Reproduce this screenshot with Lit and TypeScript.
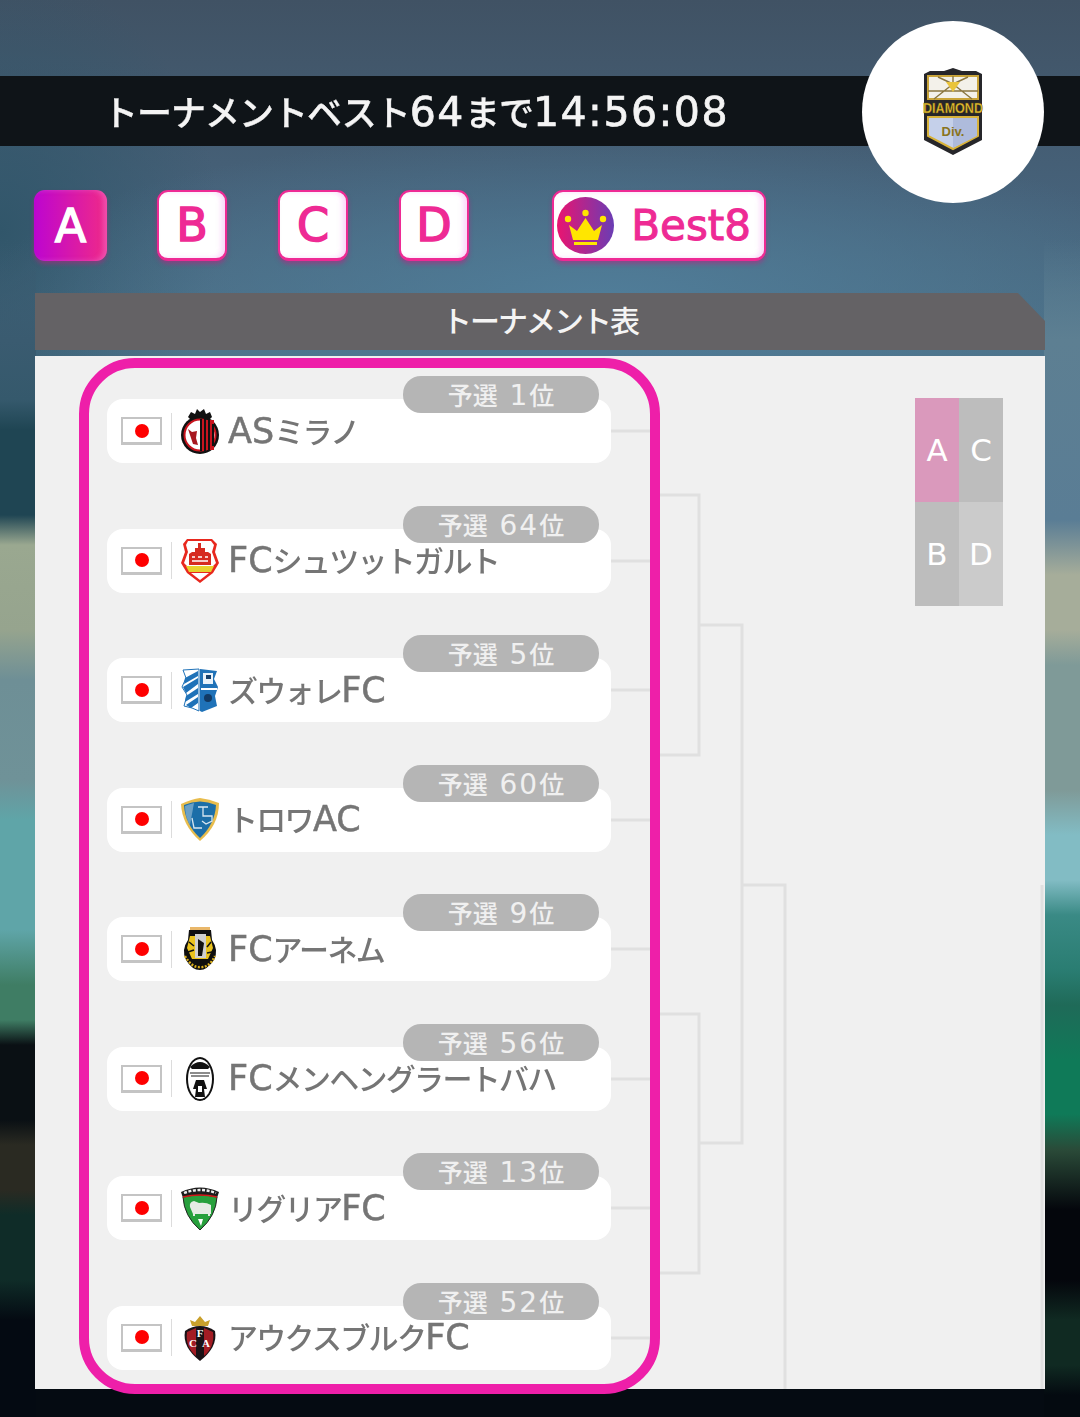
import { LitElement, css, html, svg } from 'lit';
import { customElement } from 'lit/decorators.js';

const teams = [
  { rank: '予選 1位', name: 'ASミラノ', crest: 'milan' },
  { rank: '予選 64位', name: 'FCシュツットガルト', crest: 'stuttgart' },
  { rank: '予選 5位', name: 'ズウォレFC', crest: 'zwolle' },
  { rank: '予選 60位', name: 'トロワAC', crest: 'troyes' },
  { rank: '予選 9位', name: 'FCアーネム', crest: 'arnhem' },
  { rank: '予選 56位', name: 'FCメンヘングラートバハ', crest: 'mgladbach' },
  { rank: '予選 13位', name: 'リグリアFC', crest: 'liguria' },
  { rank: '予選 52位', name: 'アウクスブルクFC', crest: 'augsburg' },
];

// latin and digits are set wider than the kana in the game's font
const mixed = (text: string) =>
  text.split(/([A-Za-z0-9:]+)/).map((part, i) => (i % 2 ? html`<span class="lat">${part}</span>` : part));

const crests: Record<string, unknown> = {
  milan: svg`
    <path d="M8 9 L11 4 L15 6 L17 1 L20 4 L24 1 L26 6 L30 4 L32 9 L28 13 H12 Z" fill="#111"/>
    <circle cx="20" cy="27" r="19" fill="#111"/>
    <circle cx="20" cy="27" r="15.5" fill="#fff" stroke="#c8141e" stroke-width="2"/>
    <path d="M20 12 H34 V42 H20 Z" fill="#c8141e"/>
    <path d="M21 11 V43 M25 11 V43 M29 12 V42 M33 16 V38" stroke="#111" stroke-width="2"/>
    <path d="M8 21 L12 24 L17 23 L16 30 L18 37 L13 36 L11 30 Z" fill="#a81820"/>`,
  stuttgart: svg`
    <path d="M7 1 H32 L37 6 L35 14 L39 25 L33 35 L20 45 L7 35 L1 25 L5 14 L3 6 Z" fill="#e8281e"/>
    <path d="M8 3 H31 L34 7 L32 14 L36 25 L33 28 H7 L4 25 L8 14 L6 7 Z" fill="#fff"/>
    <path d="M9 16 L12 14 H15 V10 H25 V14 H28 L31 16 V27 H9 Z" fill="#d62a20"/>
    <path d="M12 19 H15 M18 19 H22 M25 19 H28 M12 23 H28" stroke="#fff" stroke-width="1.4"/>
    <path d="M18 5 H21 V10 H18 Z" fill="#d62a20"/>
    <path d="M6 28 H34 L31 34 H9 Z" fill="#e8d22c"/>
    <path d="M11 35 H29 L20 42 Z" fill="#fff"/>`,
  zwolle: svg`
    <path d="M3 3 L19 2 V44 L12 41 L4 39 L7 28 L2 20 L6 11 Z" fill="#fff" stroke="#1f72b8" stroke-width="1"/>
    <path d="M5 11 L18 4 V9 L4 17 Z M3 20 L18 11 V17 L6 26 Z M6 29 L18 21 V27 L5 35 Z M6 38 L18 30 V36 L11 41 Z" fill="#1f72b8"/>
    <path d="M20 2 L37 4 L34 12 L38 20 L35 29 L37 39 L22 45 L20 44 Z" fill="#1f72b8"/>
    <path d="M23 6 H33 V17 H23 Z" fill="#e8f2fa"/>
    <path d="M26 8 H31 V12 H26 Z" fill="#16406c"/>
    <path d="M21 21 H37 V23 H21 Z" fill="#fff"/>
    <circle cx="28" cy="31" r="4" fill="#123a64"/>`,
  troyes: svg`
    <path d="M1 7 Q12 2 20 1 Q29 2 39 6 Q39 28 20 44 Q2 28 1 7 Z" fill="#e8bc4c"/>
    <path d="M4 8 Q20 1 36 8 Q35 27 20 41 Q5 27 4 8 Z" fill="#1b6ea8"/>
    <path d="M5 9 Q10 7 14 6 L10 28 Q5 20 5 9 Z" fill="#fff" opacity=".35"/>
    <path d="M18 10 H28 M23 10 V19 H32 V24 L26 27 L22 24 M12 21 L14 31 H22" fill="none" stroke="#d7e6f0" stroke-width="1.3"/>`,
  arnhem: svg`
    <rect x="10" y="1" width="20" height="3" fill="#e9b76a"/>
    <path d="M9 4 H31 L32 14 Q39 24 34 34 Q27 44 20 44 Q12 44 6 34 Q1 24 8 14 Z" fill="#0f0f0f"/>
    <path d="M10 10 H30 L33 22 L28 33 H12 L7 22 Z" fill="#e9c21e"/>
    <path d="M15 8 H26 V32 H15 Z" fill="#cfcfcf"/>
    <path d="M18 13 L24 17 L22 30 H18 Z" fill="#111"/>
    <path d="M9 16 L14 20 M31 16 L27 21 M8 26 L14 24 M32 26 L27 27" stroke="#111" stroke-width="1.6"/>
    <path d="M5 30 Q12 42 20 41 Q29 42 35 30" fill="none" stroke="#d9ae1c" stroke-width="2.4" stroke-dasharray="2 1.5"/>`,
  mgladbach: svg`
    <ellipse cx="20" cy="23" rx="14" ry="22" fill="#111"/>
    <ellipse cx="20" cy="23" rx="12" ry="20" fill="#fff"/>
    <path d="M10 11 Q20 1 30 11 L28 13 H12 Z" fill="#111"/>
    <path d="M10 17 H30 M11 20 H29" stroke="#666" stroke-width="1.4"/>
    <path d="M16 24 H24 L27 33 H24 L25 41 H15 L16 33 H13 Z" fill="#111"/>
    <path d="M18 30 H22 V36 H18 Z" fill="#fff"/>`,
  liguria: svg`
    <path d="M1 7 Q20 -2 39 7 L37 13 H3 Z" fill="#1c1c1c"/>
    <path d="M4 8 Q20 2 36 8" fill="none" stroke="#eee" stroke-width="2.4" stroke-dasharray="3 1.6"/>
    <path d="M3 12 Q20 8 37 12 Q36 31 20 45 Q4 31 3 12 Z" fill="#27a03c" stroke="#222" stroke-width="1"/>
    <path d="M3 12 Q20 8 37 12" fill="none" stroke="#d41818" stroke-width="1.5"/>
    <path d="M10 22 Q9 17 14 16 L19 18 Q26 17 31 20 L31 29 H13 Z" fill="#e6ebe4"/>
    <path d="M14 29 V31 M29 29 V31" stroke="#e6ebe4" stroke-width="2"/>
    <path d="M18 34 H23 L21 41 Z" fill="#fff"/>`,
  augsburg: svg`
    <path d="M12 11 L10 5 L15 7 L20 1 L25 7 L30 5 L28 11 Z" fill="#c9a02c"/>
    <path d="M5 16 Q12 11 20 11 Q28 11 35 16 Q38 32 20 46 Q2 32 5 16 Z" fill="#1a1216"/>
    <path d="M7 17 L16 13 V41 Q5 32 7 17 Z M33 17 L24 13 V41 Q35 32 33 17 Z" fill="#a21c24"/>
    <text x="20" y="22" text-anchor="middle" font-family="Liberation Serif" font-weight="700" font-size="11" fill="#fff">F</text>
    <text x="13" y="32" text-anchor="middle" font-family="Liberation Serif" font-weight="700" font-size="11" fill="#fff">C</text>
    <text x="26" y="32" text-anchor="middle" font-family="Liberation Serif" font-weight="700" font-size="11" fill="#fff">A</text>`,
};

@customElement('app-root')
export class AppRoot extends LitElement {
  static styles = css`
    :host {
      display: block;
      position: relative;
      width: 1080px;
      height: 1417px;
      overflow: hidden;
      font-family: 'Noto Sans CJK JP', 'Liberation Sans', sans-serif;
      background:
        linear-gradient(180deg, transparent 240px, #3a5b70 340px, #35596c 400px, #1f4553 430px, #1f4553 515px,
          #9aa890 545px, #96a48e 630px, #6e8f96 680px, #6f9298 780px, #5fa5a8 820px, #5fa5a8 930px,
          #3f7d64 985px, #3f7d64 1020px, #0a1014 1045px, #0a1014 1120px, #2a2a22 1145px, #2a2a22 1190px,
          #0f2c28 1215px, #0f2c28 1280px, #040a12 1320px) left top / 36px 100% no-repeat,
        linear-gradient(180deg, transparent 240px, #5d7f92 340px, #5a7d95 520px, #a6ad9a 575px, #a6ad9a 630px,
          #7f9a98 665px, #7f9a98 790px, #82bcc4 835px, #82bcc4 880px, #3a8a85 915px, #2a7d72 970px,
          #1f6a58 1005px, #0f7a58 1060px, #0f7a58 1114px, #2a4a38 1150px, #04060c 1210px, #04060c 1280px,
          #102a22 1320px, #102a22 1365px, #040a10 1395px) right top / 36px 100% no-repeat,
        radial-gradient(ellipse 620px 170px at 600px 300px, #507d99, transparent),
        radial-gradient(ellipse 220px 260px at 0 230px, #31566a, transparent),
        linear-gradient(180deg, #405264 0, #46627a 200px, #4c7086 350px, #4c7086 1300px, #050b12 1300px);
    }

    .bar {
      margin-top: 76px;
      height: 70px;
      padding-left: 103px;
      background: #0f1418;
      color: #f4f4f4;
      font-size: 35px;
      font-weight: 500;
      line-height: 70px;
      letter-spacing: -1px;
      white-space: nowrap;
      -webkit-text-stroke: 0.3px #f4f4f4;
    }

    .bar span {
      filter: blur(0.5px);
      display: inline-block;
    }

    .bar .lat {
      font-family: 'DejaVu Sans', sans-serif;
      font-size: 41px;
      font-weight: 400;
      letter-spacing: 1.5px;
      -webkit-text-stroke: 0.7px #f4f4f4;
    }

    .emblem {
      position: absolute;
      left: 862px;
      top: 21px;
      width: 182px;
      height: 182px;
      display: flex;
      align-items: center;
      justify-content: center;
      border-radius: 50%;
      background: #fff;
    }

    .tabs {
      display: flex;
      align-items: flex-start;
      margin: 44px 0 0 34px;
    }

    .tab {
      box-sizing: border-box;
      width: 70px;
      height: 71px;
      margin-right: 51px;
      display: flex;
      align-items: center;
      justify-content: center;
      border: 2px solid #ee2a94;
      border-bottom-width: 3px;
      border-radius: 11px;
      background: #fff;
      color: #ee2a94;
      font-family: 'DejaVu Sans', sans-serif;
      font-size: 46px;
      -webkit-text-stroke: 1.5px currentColor;
      box-shadow: 0 3px 4px rgba(190, 30, 130, 0.5), inset -4px 0 5px rgba(240, 150, 240, 0.35);
    }

    .tab.on {
      width: 73px;
      margin-right: 50px;
      border: 0;
      background: linear-gradient(90deg, #bd05d0, #f02a88);
      color: #fff;
    }

    .tab.best {
      width: 214px;
      margin: 0 0 0 32px;
      padding: 0 13px 0 3px;
      justify-content: space-between;
      font-size: 42px;
      -webkit-text-stroke: 1px currentColor;
    }

    .title {
      margin: 32px 35px 0;
      height: 57px;
      background: #646265;
      color: #f4f4f4;
      font-size: 30px;
      font-weight: 500;
      letter-spacing: -2px;
      line-height: 53px;
      text-align: center;
      clip-path: polygon(0 0, 983px 0, 100% 28px, 100% 100%, 0 100%);
    }

    .panel {
      position: relative;
      box-sizing: border-box;
      height: 1033px;
      margin: 6px 35px 0;
      padding: 43px 0 0 72px;
      background: #f0f0f0;
    }

    .lines {
      position: absolute;
      left: 0;
      top: 0;
    }

    .list {
      position: relative;
      display: flex;
      flex-direction: column;
      gap: 65.57px;
      width: 504px;
    }

    .row {
      position: relative;
      height: 64px;
      display: flex;
      align-items: center;
      border-radius: 16px;
      background: #fff;
    }

    .rank {
      position: absolute;
      right: 12px;
      top: -23px;
      width: 196px;
      height: 37px;
      border-radius: 18px;
      background: #b5b5b5;
      color: #f0f0f0;
      font-size: 25px;
      font-weight: 500;
      line-height: 37px;
      text-align: center;
      white-space: pre;
      word-spacing: 6px;
    }

    .rank .lat {
      font-family: 'DejaVu Sans', sans-serif;
      font-size: 28px;
      font-weight: 400;
      letter-spacing: 2px;
    }

    .flag {
      box-sizing: border-box;
      flex: none;
      width: 41px;
      height: 28px;
      margin-left: 14px;
      display: flex;
      align-items: center;
      justify-content: center;
      border: 2px solid #c4c4c4;
      border-bottom-width: 3px;
      background: #fff;
    }

    .flag i {
      width: 14px;
      height: 14px;
      border-radius: 50%;
      background: #fe0000;
    }

    .sep {
      flex: none;
      width: 1px;
      height: 37px;
      margin: 0 8px 0 9px;
      background: #dcdcdc;
    }

    .crest {
      flex: none;
      width: 40px;
      height: 46px;
    }

    .name {
      margin: 0 0 2px 8px;
      color: #757575;
      font-size: 30px;
      font-weight: 500;
      letter-spacing: -1.7px;
      line-height: 32px;
      white-space: nowrap;
      filter: blur(0.4px);
    }

    .name .lat {
      font-family: 'DejaVu Sans', sans-serif;
      font-size: 35px;
      font-weight: 400;
      letter-spacing: 0;
      -webkit-text-stroke: 0.5px #757575;
    }

    .legend {
      position: absolute;
      left: 880px;
      top: 42px;
      display: grid;
      grid-template-columns: 44px 44px;
      grid-auto-flow: column;
      grid-template-rows: 104px 104px;
    }

    .legend span {
      display: flex;
      align-items: center;
      justify-content: center;
      background: #bdbdbd;
      color: #fff;
      font-family: 'DejaVu Sans', sans-serif;
      font-size: 31px;
    }

    .legend .a {
      background: #da99bc;
    }

    .legend .d {
      background: #cbcbcb;
    }

    .focus {
      position: absolute;
      left: 79px;
      top: 358px;
      box-sizing: border-box;
      width: 581px;
      height: 1036px;
      border: 10px solid #ee1fa9;
      border-radius: 56px;
    }
  `;

  private renderLines() {
    const ys = [75, 205, 334, 464, 593, 723, 852, 982];
    return html`<svg class="lines" width="1010" height="1033" fill="none" stroke="#e0e0e0" stroke-width="3">
      ${ys.map((y) => svg`<path d="M575 ${y} H625"/>`)}
      <path d="M620 139 H664 V399 H620 M620 658 H664 V917 H620"/>
      <path d="M664 269 H707 V787 H664"/>
      <path d="M707 529 H750 V1033"/>
      <path d="M1007 529 V1033"/>
    </svg>`;
  }

  protected render() {
    return html`
      <div class="bar"><span>${mixed('トーナメントベスト64まで14:56:08')}</span></div>
      <div class="emblem">
        <svg width="74" height="88" viewBox="-6 0 74 88">
          <path d="M2 6 L8 3 H22 L31 0 L40 3 H54 L60 6 V72 L31 87 L2 72 Z" fill="#26262a"/>
          <path d="M6 8 H56 V31 H6 Z" fill="#f3f1ea" stroke="#c9a43a" stroke-width="2"/>
          <path d="M6 23 H56 M31 16 L12 31 M31 16 L50 31 M31 16 V8 M31 16 L16 9 M31 16 L46 9" stroke="#8a7640" stroke-width="1.4"/>
          <path d="M24 14 H38 L31 24 Z" fill="#eac43a"/>
          <path d="M6 49 H56 V68 L31 81 L6 68 Z" fill="#c5d0ea" stroke="#d8b23a" stroke-width="2"/>
          <path d="M31 50 H55 V68 L31 80 Z" fill="#aebbdc"/>
          <text x="31" y="45" text-anchor="middle" font-family="Liberation Sans" font-weight="700" font-size="14" textLength="60" lengthAdjust="spacingAndGlyphs" fill="#e6c030" stroke="#5c4a10" stroke-width=".4">DIAMOND</text>
          <text x="31" y="68" text-anchor="middle" font-family="Liberation Sans" font-weight="700" font-size="13" fill="#8a7420">Div.</text>
        </svg>
      </div>
      <div class="tabs">
        <div class="tab on">A</div>
        <div class="tab">B</div>
        <div class="tab">C</div>
        <div class="tab">D</div>
        <div class="tab best">
          <svg width="57" height="57" viewBox="0 0 57 57">
            <defs>
              <linearGradient id="bestFill">
                <stop offset="0" stop-color="#ea1470" />
                <stop offset="1" stop-color="#6a3db4" />
              </linearGradient>
            </defs>
            <circle cx="28.5" cy="28.5" r="28.5" fill="url(#bestFill)" />
            <circle cx="11" cy="22" r="3.2" fill="#ffe600" />
            <circle cx="28.5" cy="16" r="3.2" fill="#ffe600" />
            <circle cx="46" cy="22" r="3.2" fill="#ffe600" />
            <path d="M12 28 L20 34 L28.5 21 L37 34 L45 28 L41 43 H16 Z" fill="#ffe600" />
            <rect x="17" y="45" width="23" height="3" fill="#ffe600" />
          </svg>
          <span>Best8</span>
        </div>
      </div>
      <div class="title">トーナメント表</div>
      <div class="panel">
        ${this.renderLines()}
        <div class="list">
          ${teams.map(
            (t) => html`
              <div class="row">
                <div class="rank">${mixed(t.rank)}</div>
                <div class="flag"><i></i></div>
                <div class="sep"></div>
                <svg class="crest" viewBox="0 0 40 46">${crests[t.crest]}</svg>
                <div class="name">${mixed(t.name)}</div>
              </div>
            `,
          )}
        </div>
        <div class="legend">
          <span class="a">A</span>
          <span>B</span>
          <span>C</span>
          <span class="d">D</span>
        </div>
      </div>
      <div class="focus"></div>
    `;
  }
}
